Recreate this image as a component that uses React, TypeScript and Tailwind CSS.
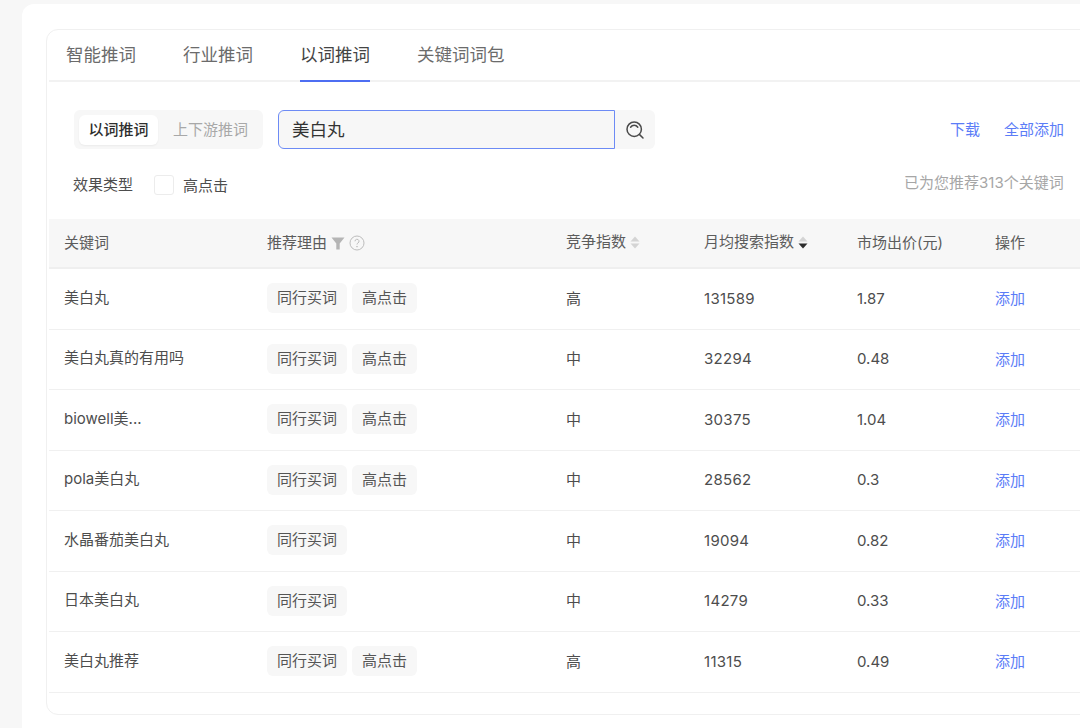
const font = "font-['Inter','Noto_Sans_CJK_SC',sans-serif]";
const cols = "grid grid-cols-[203px_299px_138px_153px_138px_1fr] items-center pl-[15px]";

const rows = [
  { word: "美白丸", tags: ["同行买词", "高点击"], level: "高", search: "131589", price: "1.87" },
  { word: "美白丸真的有用吗", tags: ["同行买词", "高点击"], level: "中", search: "32294", price: "0.48" },
  { word: "biowell美...", tags: ["同行买词", "高点击"], level: "中", search: "30375", price: "1.04" },
  { word: "pola美白丸", tags: ["同行买词", "高点击"], level: "中", search: "28562", price: "0.3" },
  { word: "水晶番茄美白丸", tags: ["同行买词"], level: "中", search: "19094", price: "0.82" },
  { word: "日本美白丸", tags: ["同行买词"], level: "中", search: "14279", price: "0.33" },
  { word: "美白丸推荐", tags: ["同行买词", "高点击"], level: "高", search: "11315", price: "0.49" },
];

function SortIcon({ down }: { down?: boolean }) {
  return (
    <svg width="10" height="13" viewBox="0 0 10 13" className="ml-1">
      <path d="M5 0.5 9.5 5.5H0.5Z" fill="#d4d4d4" />
      <path d="M5 12.5 9.5 7.5H0.5Z" fill={down ? "#2b2b2b" : "#d4d4d4"} />
    </svg>
  );
}

export default function App() {
  return (
    <div className={`${font} h-[728px] w-[1080px] overflow-hidden bg-[#f7f7f7] pl-[22px] pt-[4px]`}>
      <div className="h-[740px] w-[1100px] rounded-tl-xl bg-white pl-6 pt-[25px]">
        <div className="h-[686px] w-[1060px] rounded-xl border border-[#f0f0f0] pl-[2px]">
          {/* Tabs */}
          <div className="flex h-[52px] gap-[47px] border-b-2 border-[#f2f2f2] pl-[17px] text-[17.5px] text-[#6b6b6b]">
            <div className="pt-[13px] leading-6">智能推词</div>
            <div className="pt-[13px] leading-6">行业推词</div>
            <div className="-mb-0.5 h-[52px] border-b-2 border-[#4e6ef2] pt-[13px] leading-6 text-[#444]">以词推词</div>
            <div className="pt-[13px] leading-6">关键词词包</div>
          </div>

          {/* Search */}
          <div className="flex h-[68px] items-start pl-[25px] pt-[28px]">
            <div className="flex h-[39px] w-[189px] items-center rounded-md bg-[#f7f7f7] px-[5px] text-[15px]">
              <div className="flex h-[30px] w-[79px] items-center justify-center rounded-md bg-white pt-px font-medium text-[#2e2e2e] shadow-[0_1px_2px_rgba(0,0,0,0.05)]">以词推词</div>
              <div className="ml-[15px] pt-px text-[#a8a8a8]">上下游推词</div>
            </div>
            <div className="ml-[15px] flex h-[39px] w-[337px] items-center rounded-l-md border border-[#6d8bf5] bg-[#f7f7f7] pl-[13px] pt-px text-[17.5px] text-[#333]">美白丸</div>
            <div className="flex h-[39px] w-10 items-center justify-center rounded-r-md bg-[#f7f7f7]">
              <svg width="20" height="20" viewBox="0 0 20 20" fill="none" stroke="#4a4a4a" strokeWidth="1.5" strokeLinecap="round">
                <circle cx="9.2" cy="9.2" r="7.2" />
                <path d="M5.6 7.2a4.4 4.4 0 0 1 7.2 0" />
                <path d="M14.6 14.6 18 18" />
              </svg>
            </div>
            <div className="ml-[295px] mt-[11px] text-[15px] leading-[18px] text-[#5b7cf7]">下载</div>
            <div className="ml-[24px] mt-[11px] text-[15px] leading-[18px] text-[#5b7cf7]">全部添加</div>
          </div>

          {/* Filter */}
          <div className="flex h-[69px] items-start pl-[24px] pt-[25px] text-[15px] text-[#4d4d4d]">
            <div className="-mt-px leading-[22px]">效果类型</div>
            <div className="ml-[21px] h-5 w-5 rounded-[3px] border border-[#ececec] bg-white" />
            <div className="ml-[9px] leading-[22px]">高点击</div>
            <div className="ml-[676px] -mt-[3px] leading-[22px] text-[#a6a6a6]">已为您推荐313个关键词</div>
          </div>

          {/* Table header */}
          <div className={`${cols} h-[50px] border-b-2 border-[#efefef] bg-[#f7f7f7] text-[15px] text-[#5c5c5c]`}>
            <div>关键词</div>
            <div className="flex items-center">
              推荐理由
              <svg width="14" height="13" viewBox="0 0 14 13" className="ml-1">
                <path d="M0.5 0.5H13.5L8.7 6.5V12.5H5.3V6.5Z" fill="#b5b5b5" />
              </svg>
              <svg width="16" height="16" viewBox="0 0 16 16" className="ml-1" fill="none" stroke="#bdbdbd">
                <circle cx="8" cy="8" r="7" />
                <path d="M6 6.3a2 2 0 1 1 3 1.7c-.7.4-1 .8-1 1.5" />
                <circle cx="8" cy="11.7" r=".4" />
              </svg>
            </div>
            <div className="-mt-[2px] flex items-center">竞争指数<SortIcon /></div>
            <div className="-mt-[2px] flex items-center">月均搜索指数<SortIcon down /></div>
            <div>市场出价(元)</div>
            <div>操作</div>
          </div>

          {/* Table rows */}
          {rows.map((r) => (
            <div key={r.word} className={`${cols} h-[60.5px] border-b border-[#f0f0f0] text-[15px] text-[#4d4d4d]`}>
              <div className="-mt-[2px]">{r.word}</div>
              <div className="-mt-px flex gap-[5px]">
                {r.tags.map((t) => (
                  <span key={t} className="flex h-[30px] items-center rounded-md bg-[#f7f7f7] px-2.5 text-[#555]">{t}</span>
                ))}
              </div>
              <div>{r.level}</div>
              <div className="tracking-[0.3px]">{r.search}</div>
              <div>{r.price}</div>
              <div className="mt-px text-[#5b7cf7]">添加</div>
            </div>
          ))}
        </div>
      </div>
    </div>
  );
}
